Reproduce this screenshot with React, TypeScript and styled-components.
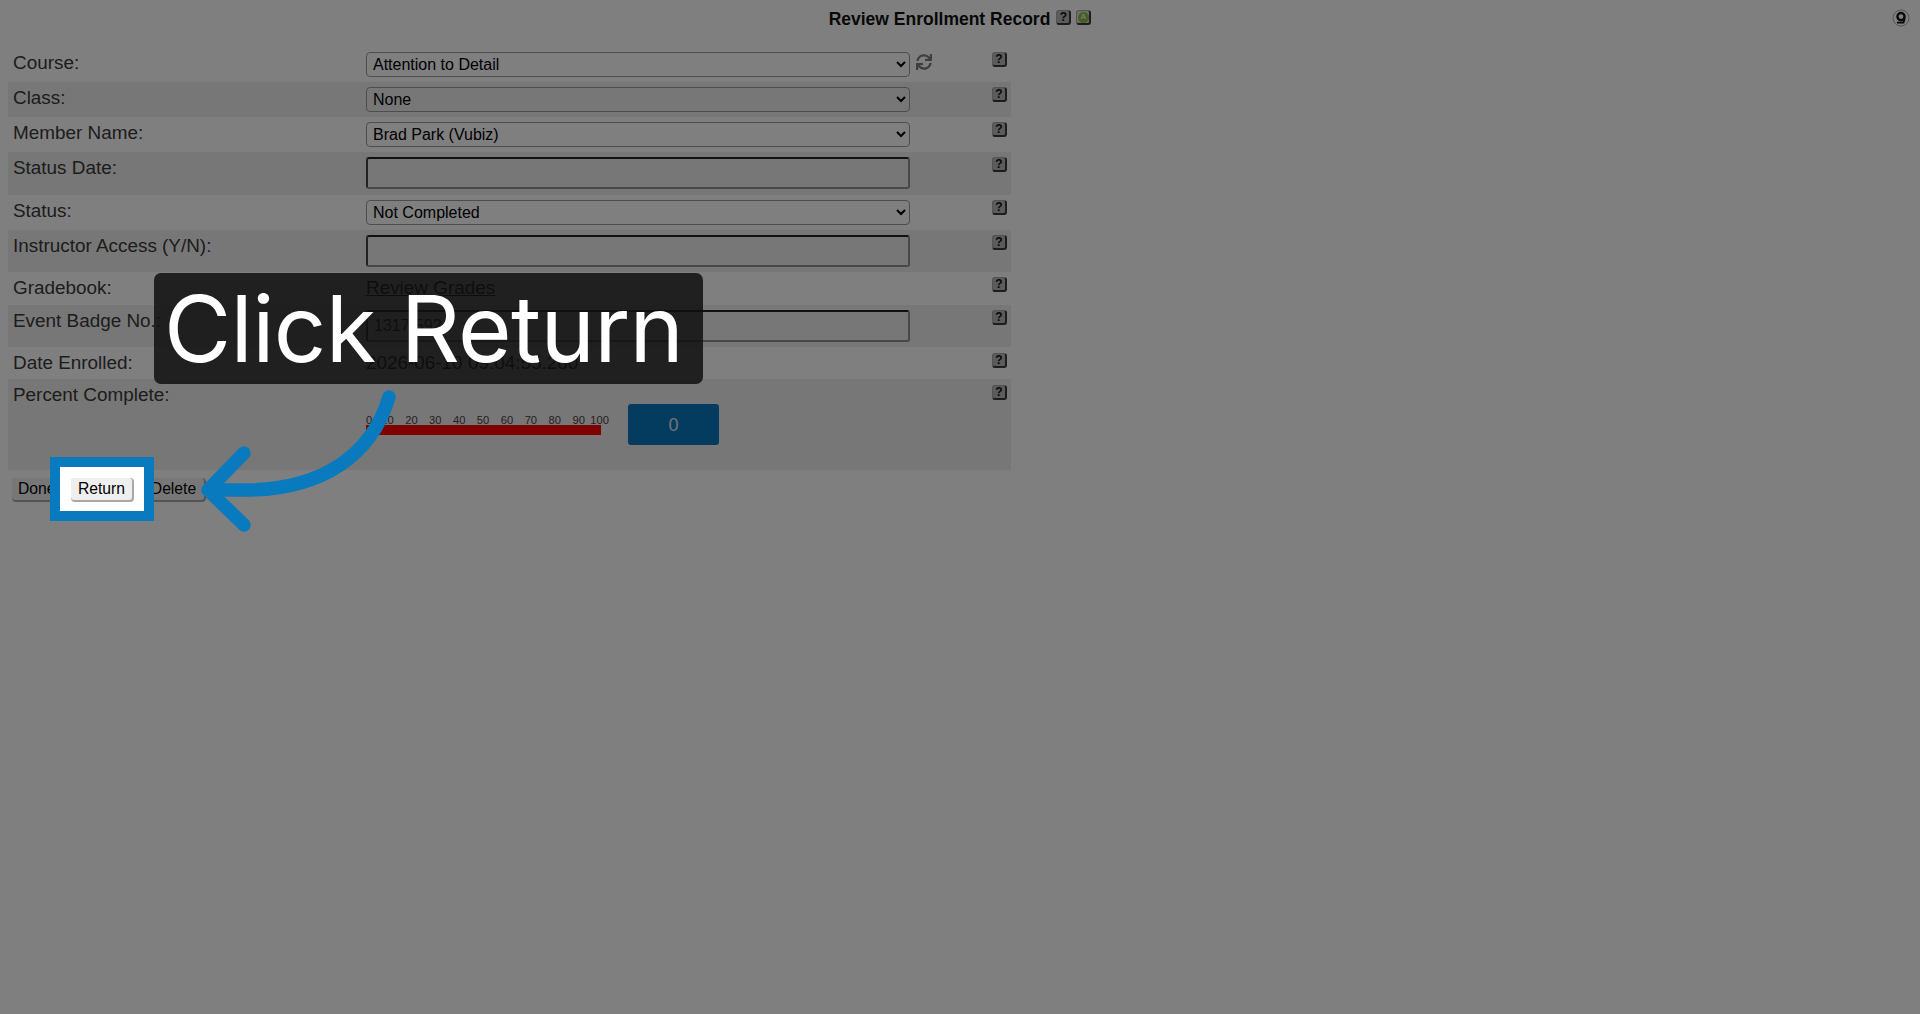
import { useState } from 'react';
import styled, { createGlobalStyle } from 'styled-components';
import { FaSync } from 'react-icons/fa';

const GlobalStyle = createGlobalStyle`
  html, body {
    margin: 0;
    padding: 0;
    height: 100%;
    background: #ffffff;
    font-family: 'Liberation Sans', Arial, sans-serif;
    color: #000;
    overflow: hidden;
  }
`;

const Page = styled.div`
  position: relative;
  width: 1920px;
  height: 1014px;
  overflow: hidden;
  background: #fff;
`;

const Header = styled.div`
  height: 47px;
  display: flex;
  align-items: flex-start;
  justify-content: center;
  padding-top: 9px;
  box-sizing: border-box;
  font-size: 17.5px;
  font-weight: 700;
  gap: 6px;
`;

const Title = styled.span`
  line-height: 20px;
  color: #111;
`;

const TitleIcons = styled.div`
  display: flex;
  gap: 5px;
  padding-top: 1px;
`;

const HelpIcon = styled.span<{ $green?: boolean }>`
  display: flex;
  align-items: center;
  justify-content: center;
  box-sizing: border-box;
  width: 15px;
  height: 15px;
  border-radius: 3px;
  background: ${(p) => (p.$green ? '#d9e4c8' : '#b8b8b8')};
  border: 1px solid #a8a8a8;
  border-right: 2px solid #3a3a3a;
  border-bottom: 2px solid #3a3a3a;
  font-size: 12px;
  font-weight: 700;
  color: #111;
  line-height: 1;
`;

const GreenDot = styled.span`
  display: flex;
  align-items: center;
  justify-content: center;
  width: 11px;
  height: 11px;
  border-radius: 50%;
  background: #8fbb4c;
  color: #e8f0d8;
  font-size: 8px;
`;

const Form = styled.div`
  margin-left: 8px;
  width: 1003px;
`;

const Row = styled.div<{ $striped?: boolean; $height: number }>`
  display: grid;
  grid-template-columns: 358px 1fr 19px;
  height: ${(p) => p.$height}px;
  box-sizing: border-box;
  background: ${(p) => (p.$striped ? '#efefef' : 'transparent')};
`;

const Label = styled.div`
  padding: 5px 0 0 5px;
  font-size: 18.9px;
  line-height: 22px;
  color: #3a3a3a;
`;

const Control = styled.div`
  display: flex;
  align-items: flex-start;
  gap: 6px;
  padding-top: 5px;
`;

const Select = styled.select`
  width: 544px;
  height: 25px;
  box-sizing: border-box;
  border: 1px solid #9a9a9a;
  border-radius: 4px;
  padding-left: 2px;
  background: transparent;
  font-family: 'Liberation Sans', Arial, sans-serif;
  font-size: 16px;
  color: #000;
`;

const TextInput = styled.input`
  width: 544px;
  height: 32px;
  box-sizing: border-box;
  border: 2px solid;
  border-color: #222 #909090 #909090 #444;
  border-radius: 3px;
  padding: 0 6px;
  background: transparent;
  font-family: 'Liberation Sans', Arial, sans-serif;
  font-size: 16px;
  color: #222;
`;

const Refresh = styled(FaSync)`
  margin-top: 2px;
  width: 16px;
  height: 16px;
  color: #7c7c7c;
`;

const HelpCell = styled.div<{ $top?: number }>`
  display: flex;
  align-items: flex-start;
  padding-top: ${(p) => p.$top ?? 5}px;
`;

const PlainValue = styled.div`
  font-size: 18.9px;
  line-height: 22px;
  color: #111;
`;

const GradesLink = styled.a`
  font-size: 18.9px;
  line-height: 22px;
  color: #111;
  text-decoration: underline;
`;

const MeterRow = styled.div`
  display: flex;
  align-items: flex-start;
  gap: 27px;
  padding-top: 25px;
`;

const Meter = styled.div`
  width: 235px;
  padding-top: 11px;
`;

const Ticks = styled.div`
  display: flex;
  gap: 11.45px;
  width: 243px;
  font-size: 11.2px;
  line-height: 10px;
  color: #444;
`;

const Tick = styled.span`
  &:nth-child(2) {
    margin-left: -2.4px;
  }
  &:last-child {
    margin-left: -6px;
  }
`;

const MeterBar = styled.div`
  height: 10px;
  background: #fe0000;
`;

const Score = styled.div`
  width: 91px;
  height: 41px;
  padding-top: 1px;
  box-sizing: border-box;
  border-radius: 3px;
  background: #0679bf;
  color: #e4e4e4;
  font-size: 18px;
  display: flex;
  align-items: center;
  justify-content: center;
`;

const Buttons = styled.div`
  display: flex;
  gap: 6px;
  padding: 8px 0 0 12px;
`;

const Button = styled.button`
  height: 22px;
  padding: 0 6px;
  box-sizing: border-box;
  border: 0;
  border-radius: 3px;
  background: #efefef;
  box-shadow: 1px 1px 0 1px #a8a8a8;
  font-family: 'Liberation Sans', Arial, sans-serif;
  font-size: 15.7px;
  color: #000;
`;

const DoneButton = styled(Button)`
  width: 53px;
  text-align: left;
`;

const DeleteButton = styled(Button)`
  width: 61px;
  margin-left: 5px;
`;

const Spotlight = styled.span`
  position: relative;
  z-index: 3;
  display: inline-flex;
  &::before {
    content: '';
    position: absolute;
    left: -21px;
    top: -21px;
    width: 84px;
    height: 44px;
    border: 10px solid #0a7abf;
    background: #fff;
    z-index: -1;
  }
`;

const ReturnButton = styled(Button)`
  width: 61px;
`;

const CornerIcon = styled.svg`
  position: absolute;
  right: 10px;
  top: 8px;
  width: 18px;
  height: 20px;
`;

const Dim = styled.div`
  position: absolute;
  inset: 0;
  background: rgba(0, 0, 0, 0.5);
  z-index: 1;
`;

const Callout = styled.div`
  position: absolute;
  left: 154px;
  top: 273px;
  width: 549px;
  height: 111px;
  border-radius: 7px;
  background: rgba(15, 15, 15, 0.85);
  z-index: 4;
  color: #fff;
  font-family: Inter, 'Liberation Sans', sans-serif;
  font-size: 92px;
  letter-spacing: -0.65px;
  line-height: 111px;
  padding-left: 10px;
  box-sizing: border-box;
  white-space: nowrap;
`;

const Arrow = styled.svg`
  position: absolute;
  left: 190px;
  top: 380px;
  width: 220px;
  height: 160px;
  z-index: 4;
`;

type Field = {
  label: string;
  height: number;
  select?: string;
};

const fields: Field[] = [
  { label: 'Course:', height: 35, select: 'Attention to Detail' },
  { label: 'Class:', height: 35, select: 'None' },
  { label: 'Member Name:', height: 35, select: 'Brad Park (Vubiz)' },
  { label: 'Status Date:', height: 43 },
  { label: 'Status:', height: 35, select: 'Not Completed' },
  { label: 'Instructor Access (Y/N):', height: 42 },
];

const ticks = [0, 10, 20, 30, 40, 50, 60, 70, 80, 90, 100];

const App = () => {
  const [badge, setBadge] = useState('1317-592');

  return (
    <Page>
      <GlobalStyle />
      <Header>
        <Title>Review Enrollment Record</Title>
        <TitleIcons>
          <HelpIcon>?</HelpIcon>
          <HelpIcon $green>
            <GreenDot>A</GreenDot>
          </HelpIcon>
        </TitleIcons>
      </Header>
      <CornerIcon viewBox="0 0 18 20">
        <circle cx="9" cy="10" r="8" fill="none" stroke="#aaa" strokeWidth="1" />
        <circle cx="9" cy="8.6" r="3.6" fill="none" stroke="#111" strokeWidth="2.4" />
        <path d="M5 14.6h6.5l1.2-4" fill="none" stroke="#111" strokeWidth="1.8" />
      </CornerIcon>
      <Form>
        {fields.map((f, i) => (
          <Row key={f.label} $striped={i % 2 === 1} $height={f.height}>
            <Label>{f.label}</Label>
            <Control>
              {f.select !== undefined ? (
                <Select defaultValue={f.select}>
                  <option>{f.select}</option>
                </Select>
              ) : (
                <TextInput defaultValue="" />
              )}
              {i === 0 && <Refresh />}
            </Control>
            <HelpCell>
              <HelpIcon>?</HelpIcon>
            </HelpCell>
          </Row>
        ))}
        <Row $height={33}>
          <Label>Gradebook:</Label>
          <Control>
            <GradesLink href="#">Review Grades</GradesLink>
          </Control>
          <HelpCell>
            <HelpIcon>?</HelpIcon>
          </HelpCell>
        </Row>
        <Row $striped $height={42}>
          <Label>Event Badge No.:</Label>
          <Control>
            <TextInput value={badge} onChange={(e) => setBadge(e.target.value)} />
          </Control>
          <HelpCell>
            <HelpIcon>?</HelpIcon>
          </HelpCell>
        </Row>
        <Row $height={32}>
          <Label>Date Enrolled:</Label>
          <Control>
            <PlainValue>2026-06-10 09:04:55.280</PlainValue>
          </Control>
          <HelpCell $top={6}>
            <HelpIcon>?</HelpIcon>
          </HelpCell>
        </Row>
        <Row $striped $height={91}>
          <Label>Percent Complete:</Label>
          <MeterRow>
            <Meter>
              <Ticks>
                {ticks.map((t) => (
                  <Tick key={t}>{t}</Tick>
                ))}
              </Ticks>
              <MeterBar />
            </Meter>
            <Score>0</Score>
          </MeterRow>
          <HelpCell $top={6}>
            <HelpIcon>?</HelpIcon>
          </HelpCell>
        </Row>
      </Form>
      <Buttons>
        <DoneButton>Done</DoneButton>
        <Spotlight>
          <ReturnButton>Return</ReturnButton>
        </Spotlight>
        <DeleteButton>Delete</DeleteButton>
      </Buttons>
      <Dim />
      <Callout>Click Return</Callout>
      <Arrow viewBox="190 380 220 160">
        <g fill="none" stroke="#0a7abf" strokeWidth="13.5" strokeLinecap="round" strokeLinejoin="round">
          <path d="M389 397C372 455 322 490 245 490L209 490" />
          <path d="M244 453L208 490L244 525" />
        </g>
      </Arrow>
    </Page>
  );
};

export default App;
